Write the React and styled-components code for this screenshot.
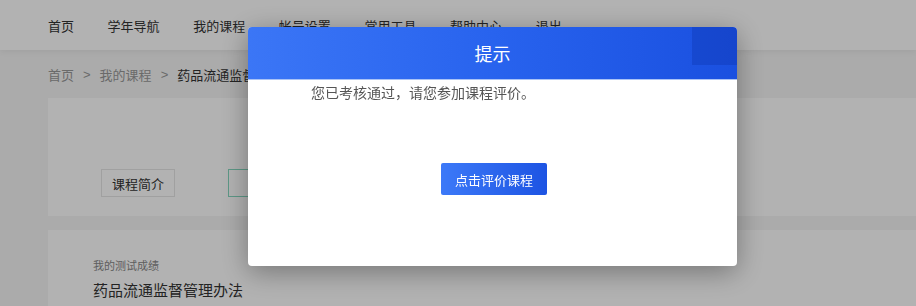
import React from "react";
import styled, { createGlobalStyle } from "styled-components";

const Global = createGlobalStyle`
  html, body { margin: 0; padding: 0; overflow: hidden; }
  body {
    background: #f5f5f5;
    font-family: "Noto Sans CJK SC", "Noto Sans", sans-serif;
    width: 916px;
    height: 306px;
  }
`;

const Page = styled.div`
  width: 916px;
  height: 306px;
  overflow: hidden;
  position: relative;
`;

const Header = styled.header`
  height: 50px;
  background: #fff;
  box-shadow: 0 2px 6px rgba(0, 0, 0, 0.06);
  display: flex;
  align-items: center;
  padding-left: 48px;
  gap: 33.6px;
`;

const NavItem = styled.a`
  font-size: 13px;
  color: #333;
  text-decoration: none;
  line-height: 1;
  white-space: nowrap;
`;

const Main = styled.main`
  padding: 0 0 0 48px;
  width: 1100px;
`;

const Crumbs = styled.div`
  height: 48px;
  display: flex;
  align-items: center;
  font-size: 13px;
  color: #999;
  white-space: nowrap;
`;

const Sep = styled.span`
  margin: 0 9px;
  font-family: "Liberation Sans", sans-serif;
`;

const Current = styled.span`
  color: #333;
`;

const Card = styled.section`
  background: #fff;
  margin-bottom: 14px;
  position: relative;
  overflow: hidden;
`;

const IntroCard = styled(Card)`
  height: 118px;
  display: flex;
  align-items: flex-end;
  padding: 0 0 19px 53px;
  box-sizing: border-box;
`;

const Tabs = styled.div`
  display: flex;
  gap: 53px;
`;

const Tab = styled.button`
  height: 28px;
  padding: 0 10px;
  font-family: inherit;
  font-size: 13px;
  color: #333;
  background: #fff;
  border: 1px solid ${(p) => (p.$active ? "#86d9c0" : "#e6e6e6")};
  width: ${(p) => (p.$active ? "104px" : "auto")};
`;

const Ring = styled.svg`
  position: absolute;
  left: 852px;
  top: 0;
`;

const ScoreCard = styled(Card)`
  padding: 27px 0 40px 45px;
  height: 120px;
`;

const Small = styled.div`
  font-size: 11px;
  color: #888;
  line-height: 16px;
`;

const Title = styled.div`
  font-size: 15px;
  color: #333;
  margin-top: 7px;
  line-height: 20px;
`;

const Overlay = styled.div`
  position: fixed;
  inset: 0;
  background: rgba(0, 0, 0, 0.3);
`;

const Dialog = styled.div`
  position: absolute;
  left: 248px;
  top: 27px;
  width: 489px;
  height: 239px;
  background: #fff;
  border-radius: 4px;
  overflow: hidden;
  box-shadow: 0 6px 28px rgba(0, 0, 0, 0.35);
  display: flex;
  flex-direction: column;
`;

const DialogHead = styled.div`
  height: 52px;
  flex: none;
  background: linear-gradient(90deg, #3b76f6 0%, #2863ee 50%, #1a50e0 100%);
  border-bottom: 1px solid #aac3f6;
  display: flex;
  align-items: center;
  justify-content: center;
  position: relative;
`;

const DialogTitle = styled.h2`
  margin: 0;
  font-size: 18px;
  font-weight: 400;
  color: #fff;
  line-height: 1;
`;

const Close = styled.span`
  position: absolute;
  right: 0;
  top: 0;
  width: 45px;
  height: 38px;
  background: rgba(0, 20, 120, 0.18);
`;

const DialogBody = styled.div`
  flex: 1;
  display: flex;
  flex-direction: column;
`;

const Message = styled.p`
  margin: 3px 0 0 63px;
  font-size: 14px;
  line-height: 18px;
  color: #555;
`;

const Action = styled.button`
  align-self: center;
  margin: 62px 0 0 3px;
  width: 106px;
  height: 32px;
  border: none;
  border-radius: 2px;
  background: linear-gradient(90deg, #3c79f8 0%, #1d54e3 100%);
  color: #fff;
  font-family: inherit;
  font-size: 13px;
`;

export default function App() {
  const nav = ["首页", "学年导航", "我的课程", "帐号设置", "常用工具", "帮助中心", "退出"];
  return (
    <Page>
      <Global />
      <Header>
        {nav.map((n) => (
          <NavItem key={n}>{n}</NavItem>
        ))}
      </Header>
      <Main>
        <Crumbs>
          <span>首页</span>
          <Sep>&gt;</Sep>
          <span>我的课程</span>
          <Sep>&gt;</Sep>
          <Current>药品流通监督管理办法</Current>
        </Crumbs>
        <IntroCard>
          <Tabs>
            <Tab>课程简介</Tab>
            <Tab $active>课程目录</Tab>
          </Tabs>
          <Ring width="120" height="118" viewBox="0 0 120 118">
            <circle cx="112" cy="-4" r="60" fill="#fcfcfc" stroke="#eeeeee" strokeWidth="2" />
            <path d="M63 52 A6 6 0 0 0 66 60" fill="none" stroke="#4a8ad8" strokeWidth="3" strokeLinecap="round" />
          </Ring>
        </IntroCard>
        <ScoreCard>
          <Small>我的测试成绩</Small>
          <Title>药品流通监督管理办法</Title>
        </ScoreCard>
      </Main>
      <Overlay>
        <Dialog>
          <DialogHead>
            <DialogTitle>提示</DialogTitle>
            <Close />
          </DialogHead>
          <DialogBody>
            <Message>您已考核通过，请您参加课程评价。</Message>
            <Action>点击评价课程</Action>
          </DialogBody>
        </Dialog>
      </Overlay>
    </Page>
  );
}
